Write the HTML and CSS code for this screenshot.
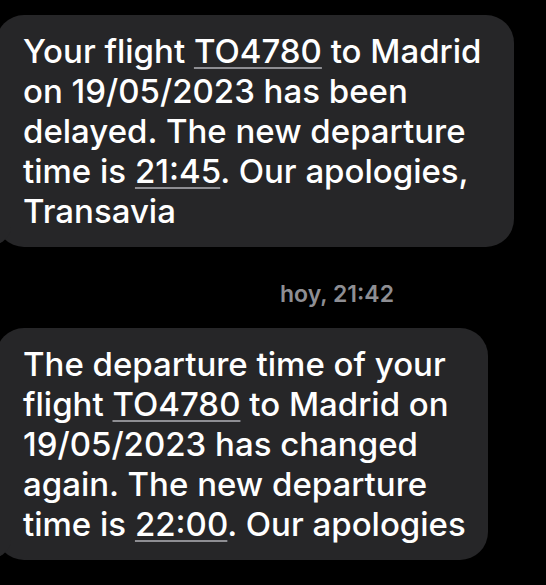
FILE: index.html
```html
<!DOCTYPE html>
<html lang="en">
<head>
    <meta charset="UTF-8">
    <meta name="viewport" content="width=device-width, initial-scale=1.0">
    <title>Mensajes</title>
    <link rel="stylesheet" href="styles.css">
</head>
<body>
    <main class="thread">
        <div class="bubble first">
            Your flight <span class="link">TO4780</span> to Madrid<br>
            on 19/05/2023 has been<br>
            delayed. The new departure<br>
            time is <span class="link">21:45</span>. Our apologies,<br>
            Transavia
        </div>
        <p class="stamp">hoy, 21:42</p>
        <div class="bubble second">
            The departure time of your<br>
            flight <span class="link">TO4780</span> to Madrid on<br>
            19/05/2023 has changed<br>
            again. The new departure<br>
            time is <span class="link">22:00</span>. Our apologies
        </div>
    </main>
</body>
</html>
```

FILE: styles.css
```css
body {
    margin: 0;
    background-color: #000;
    font-family: Inter, "Liberation Sans", sans-serif;
}
.thread {
    width: 546px;
    height: 585px;
    overflow: hidden;
    padding-top: 15px;
    box-sizing: border-box;
}
.bubble {
    position: relative;
    margin-left: -4px;
    padding: 16px 0 16px 27px;
    box-sizing: border-box;
    background-color: #262628;
    border-radius: 28px;
    color: #fff;
    font-size: 33px;
    font-weight: 500;
    line-height: 40px;
    white-space: nowrap;
}
/* tail hanging off the bottom left corner */
.bubble::before {
    content: "";
    position: absolute;
    left: -12px;
    bottom: 0;
    width: 27px;
    height: 20px;
    background-color: #262628;
    border-bottom-right-radius: 27px 20px;
}
.first {
    width: 518px;
}
.second {
    width: 492px;
}
.link {
    text-decoration: underline;
    text-decoration-color: #8e8e93;
    text-decoration-thickness: 2px;
    text-underline-offset: 4px;
}
.stamp {
    margin: 0;
    padding: 34px 0 21px 280px;
    color: #8e8e93;
    font-size: 23px;
    font-weight: 600;
    line-height: 26px;
}
```
